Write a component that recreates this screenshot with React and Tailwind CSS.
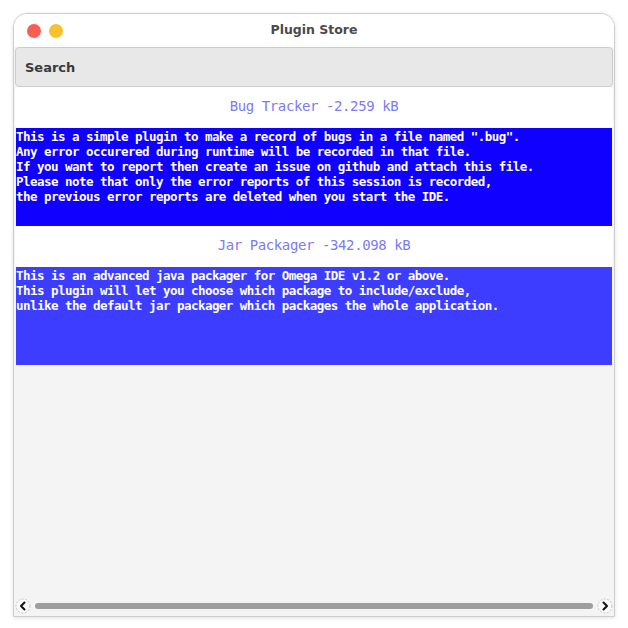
import React from "react";

const mono = { fontFamily: '"DejaVu Sans Mono", "Liberation Mono", monospace' };
const sans = { fontFamily: '"DejaVu Sans", "Noto Sans", sans-serif' };

const plugins = [
  {
    title: "Bug Tracker -2.259 kB",
    bg: "bg-[#1000ff]",
    lines: [
      'This is a simple plugin to make a record of bugs in a file named ".bug".',
      "Any error occurered during runtime will be recorded in that file.",
      "If you want to report then create an issue on github and attach this file.",
      "Please note that only the error reports of this session is recorded,",
      "the previous error reports are deleted when you start the IDE.",
    ],
  },
  {
    title: "Jar Packager -342.098 kB",
    bg: "bg-[#3d3dff]",
    lines: [
      "This is an advanced java packager for Omega IDE v1.2 or above.",
      "This plugin will let you choose which package to include/exclude,",
      "unlike the default jar packager which packages the whole application.",
    ],
  },
];

function ArrowBtn({ dir }) {
  return (
    <svg width="16" height="16" viewBox="0 0 16 16">
      <circle cx="8" cy="8" r="7" fill="#fafafa" stroke="#c4c4c4" strokeWidth="1" strokeDasharray="2 1.5" />
      {dir === "left" ? (
        <path d="M9.5 4.5 L6 8 L9.5 11.5" fill="none" stroke="#111" strokeWidth="2" strokeLinecap="round" strokeLinejoin="round" />
      ) : (
        <path d="M6.5 4.5 L10 8 L6.5 11.5" fill="none" stroke="#111" strokeWidth="2" strokeLinecap="round" strokeLinejoin="round" />
      )}
    </svg>
  );
}

export default function App() {
  return (
    <div className="w-[628px] h-[628px] bg-white pt-[13px] pl-[13px]">
      <div className="w-[602px] h-[604px] flex flex-col border border-[#cdcdcd] rounded-t-[14px] overflow-hidden bg-[#f4f4f4] shadow-[0_1px_4px_rgba(0,0,0,0.12)]">
        {/* Title bar */}
        <div className="relative h-[33px] shrink-0 bg-white flex items-center pl-[13px] gap-[8px]">
          <div className="w-[14px] h-[14px] rounded-full bg-[#fa5d54]" />
          <div className="w-[14px] h-[14px] rounded-full bg-[#f8c12b]" />
          <div
            className="absolute inset-0 flex items-center justify-center text-[12.5px] font-bold text-[#4a4a4a]"
            style={sans}
          >
            Plugin Store
          </div>
        </div>
        {/* Search */}
        <div className="h-[40px] shrink-0 mx-[1px] bg-[#e8e8e8] border border-[#cccccc] rounded-[4px] flex items-center pl-[9px] pt-[1px]">
          <span className="text-[13px] font-bold text-[#3a3a3a]" style={sans}>
            Search
          </span>
        </div>
        {/* Content */}
        <div className="flex-1 flex flex-col">
          {plugins.map((p) => (
            <div key={p.title} className="flex flex-col">
              <div className="h-[41px] mx-[1px] bg-white rounded-[4px] flex items-center justify-center pb-[2px]">
                <span className="text-[14px] tracking-[-0.4px] text-[#7b7bf3]" style={mono}>
                  {p.title}
                </span>
              </div>
              <div
                className={`h-[98px] mx-[2px] pt-[1px] ${p.bg} text-white font-bold text-[12.5px] leading-[15px] tracking-[-0.53px] whitespace-pre`}
                style={mono}
              >
                {p.lines.map((l, i) => (
                  <div key={i}>{l}</div>
                ))}
              </div>
            </div>
          ))}
        </div>
        {/* Horizontal scrollbar */}
        <div className="h-[20px] shrink-0 flex items-center px-[1px] gap-[2px] pb-[1px]">
          <ArrowBtn dir="left" />
          <div className="flex-1 h-[6px] mx-[2px] rounded-full bg-[#9e9e9e]" />
          <ArrowBtn dir="right" />
        </div>
      </div>
    </div>
  );
}
